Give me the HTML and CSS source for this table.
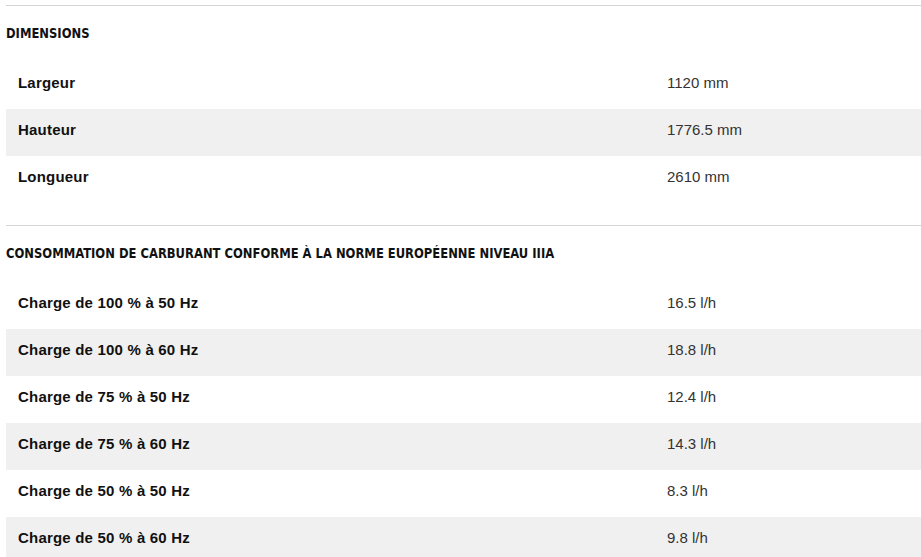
FILE: index.html
```html
<!DOCTYPE html>
<html lang="fr">
<head>
<meta charset="utf-8">
<title>Caractéristiques</title>
<link rel="stylesheet" href="styles.css">
</head>
<body>
<main class="specs">
  <section class="spec-section">
    <h2 class="spec-title"><span class="spec-title-text">DIMENSIONS</span></h2>
    <div class="spec-rows">
      <div class="spec-row"><span class="spec-label">Largeur</span><span class="spec-value">1120 mm</span></div>
      <div class="spec-row alt"><span class="spec-label">Hauteur</span><span class="spec-value">1776.5 mm</span></div>
      <div class="spec-row"><span class="spec-label">Longueur</span><span class="spec-value">2610 mm</span></div>
    </div>
  </section>
  <section class="spec-section">
    <h2 class="spec-title"><span class="spec-title-text">CONSOMMATION DE CARBURANT CONFORME À LA NORME EUROPÉENNE NIVEAU IIIA</span></h2>
    <div class="spec-rows">
      <div class="spec-row"><span class="spec-label">Charge de 100 % à 50 Hz</span><span class="spec-value">16.5 l/h</span></div>
      <div class="spec-row alt"><span class="spec-label">Charge de 100 % à 60 Hz</span><span class="spec-value">18.8 l/h</span></div>
      <div class="spec-row"><span class="spec-label">Charge de 75 % à 50 Hz</span><span class="spec-value">12.4 l/h</span></div>
      <div class="spec-row alt"><span class="spec-label">Charge de 75 % à 60 Hz</span><span class="spec-value">14.3 l/h</span></div>
      <div class="spec-row"><span class="spec-label">Charge de 50 % à 50 Hz</span><span class="spec-value">8.3 l/h</span></div>
      <div class="spec-row alt"><span class="spec-label">Charge de 50 % à 60 Hz</span><span class="spec-value">9.8 l/h</span></div>
    </div>
  </section>
</main>
</body>
</html>
```
FILE: styles.css
```css
html, body {
  margin: 0;
  padding: 0;
  background: #fff;
}

body {
  font-family: "Liberation Sans", Arial, sans-serif;
  color: #111;
}

.specs {
  padding: 5px 0 0 6px;
}

.spec-section {
  border-top: 1px solid #d4d4d4;
  padding-bottom: 22px;
}

.spec-title {
  margin: 0;
  height: 56px;
  box-sizing: border-box;
  display: flex;
  align-items: center;
  padding-bottom: 2px;
  font-family: "DejaVu Sans Condensed", "DejaVu Sans", sans-serif;
  font-stretch: condensed;
  font-weight: bold;
  font-size: 14.5px;
  color: #111;
  white-space: nowrap;
}

.spec-title-text {
  display: inline-block;
  transform: scaleX(0.887);
  transform-origin: left center;
}

.spec-row {
  display: grid;
  grid-template-columns: 649px 1fr;
  align-items: start;
  box-sizing: border-box;
  height: 47px;
  padding: 12px 12px 0;
  font-size: 15px;
  line-height: 17px;
}

.spec-row.alt {
  background: #f0f0f0;
}

.spec-label {
  font-weight: bold;
  letter-spacing: 0.2px;
  color: #111;
}

.spec-value {
  color: #333;
}
```
